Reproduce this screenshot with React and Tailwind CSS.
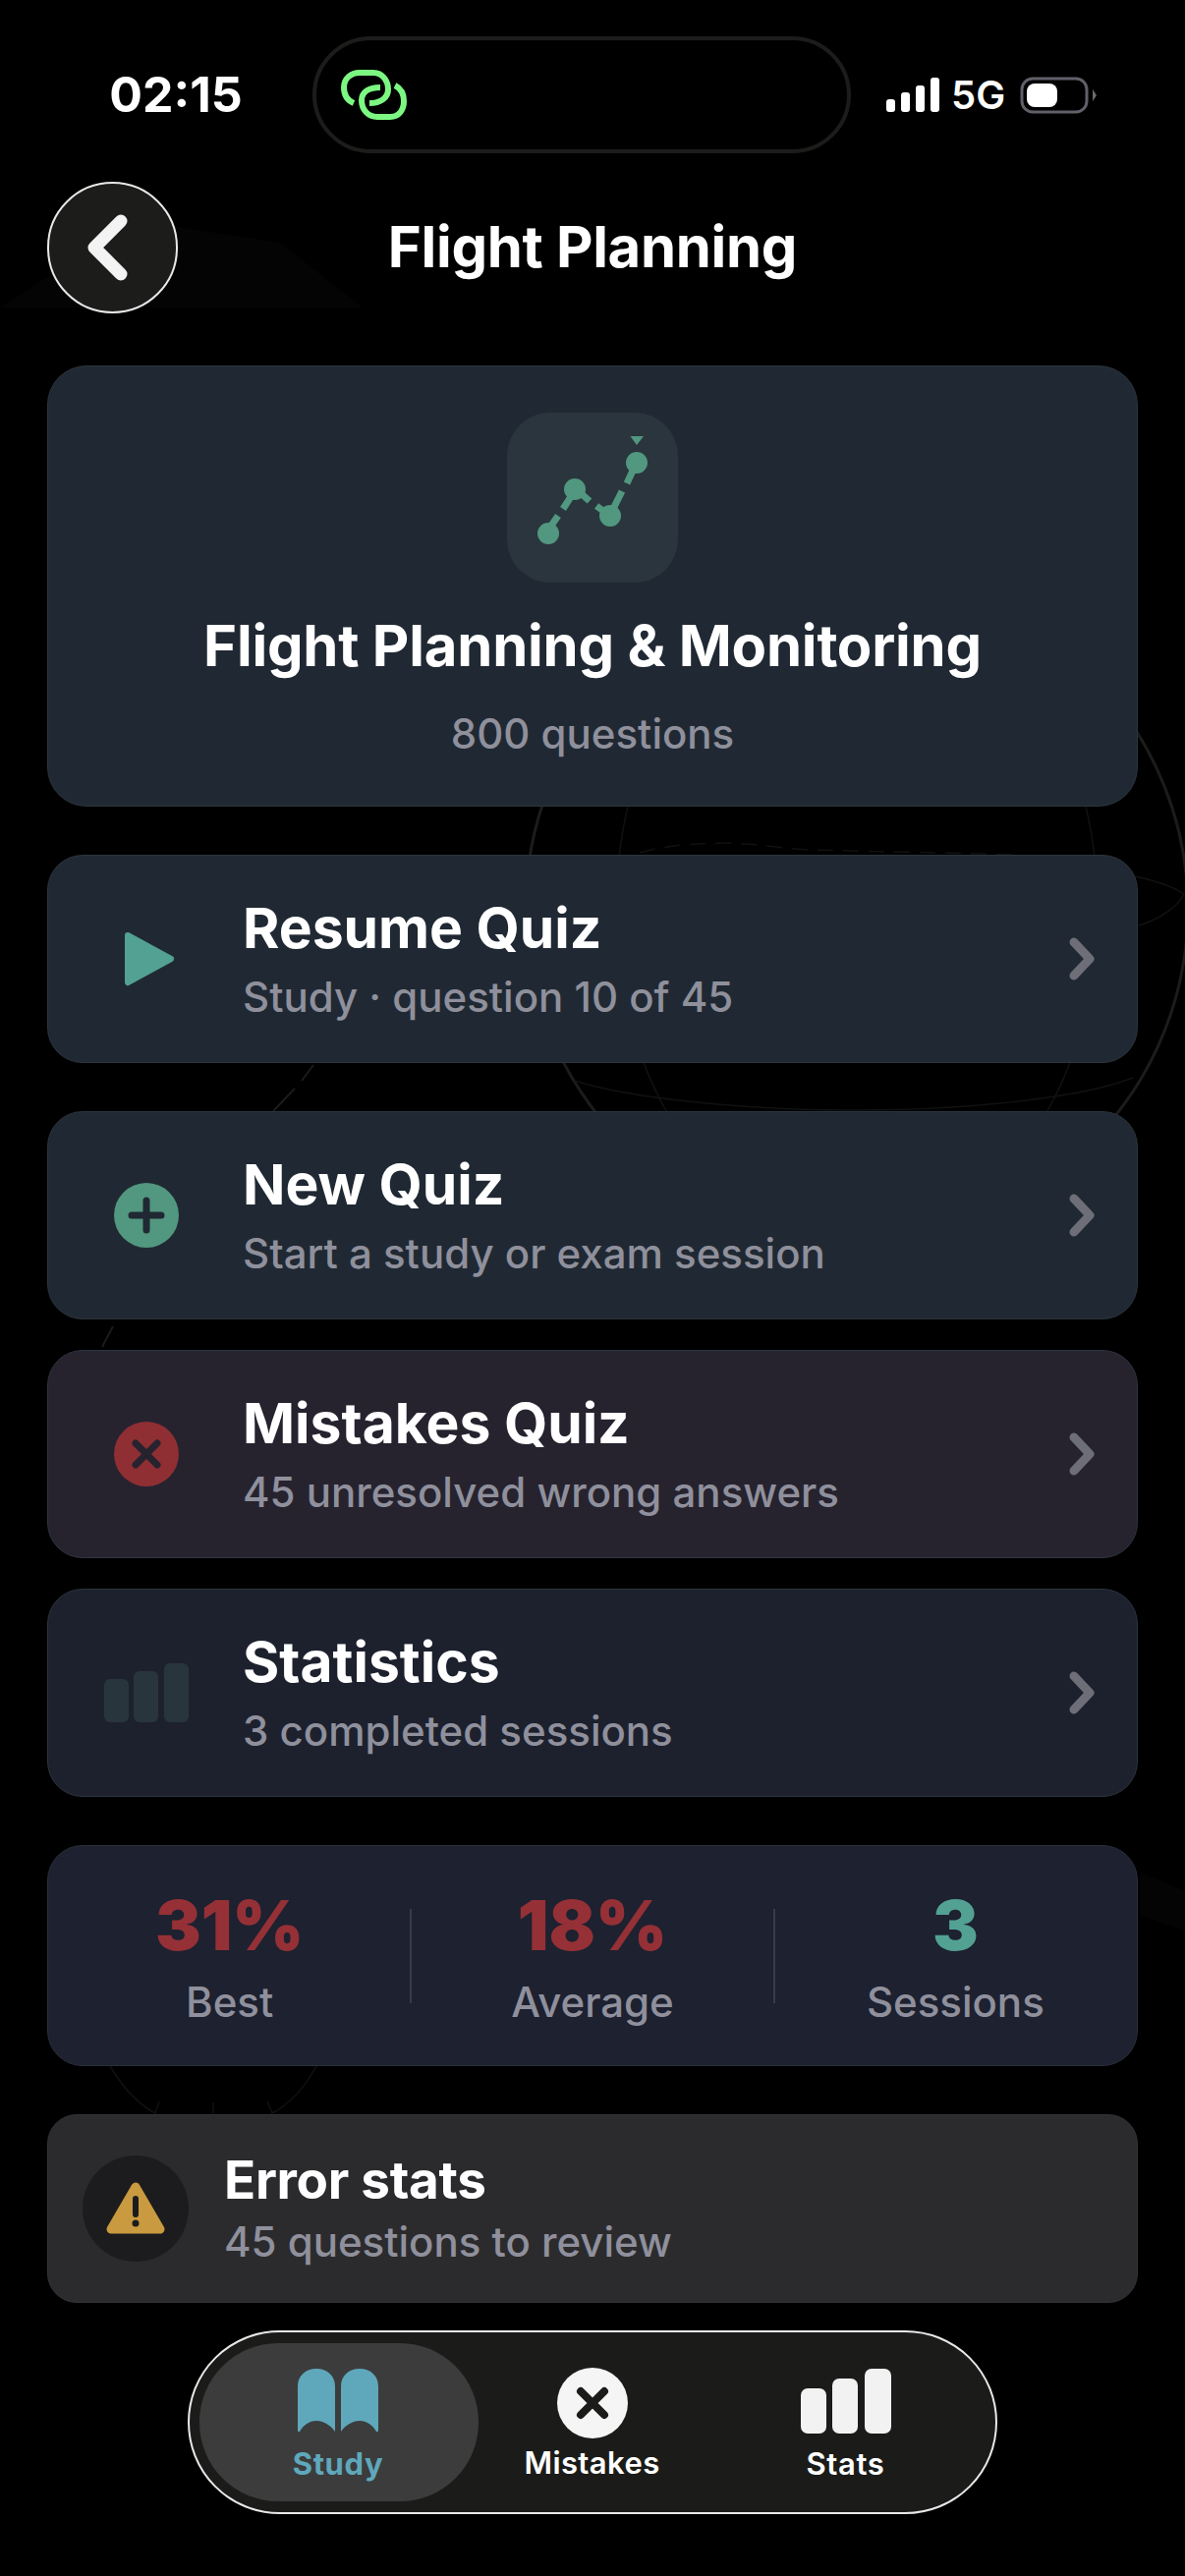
const F = { fontFamily: 'Inter, "Liberation Sans", sans-serif' };

function Chevron() {
  return (
    <svg width="30" height="44" viewBox="0 0 30 44" className="shrink-0">
      <path d="M7 5 L23 22 L7 39" fill="none" stroke="#6d6e78" strokeWidth="9" strokeLinecap="round" strokeLinejoin="round" />
    </svg>
  );
}

function ActionCard({ bg, icon, title, sub, className }) {
  return (
    <div className={`h-[212px] rounded-[36px] border border-[#2c353d] flex items-center pl-[55px] pr-[41px] ${bg} ${className}`}>
      <div className="w-[90px] h-[90px] flex items-center justify-center shrink-0">{icon}</div>
      <div className="ml-[53px] flex-1 min-w-0 flex flex-col">
        <div className="text-[57px] leading-[64px] font-bold text-white">{title}</div>
        <div className="text-[42px] leading-[50px] mt-[13px] font-medium text-[#8f909c]">{sub}</div>
      </div>
      <Chevron />
    </div>
  );
}

function Stat({ value, label, color }) {
  return (
    <div className="flex-1 flex flex-col items-center">
      <div className={`text-[70px] leading-[72px] font-black ${color}`}>{value}</div>
      <div className="text-[42px] leading-[50px] mt-[17px] font-medium text-[#8f909c]">{label}</div>
    </div>
  );
}

function Decor() {
  return (
    <svg className="absolute inset-0 pointer-events-none" width="1206" height="2622" viewBox="0 0 1206 2622" fill="none">
      <path d="M0 313 L70 268 L110 238 L154 227 L285 247 L369 313 Z" fill="#040404" />
      <path d="M1160 1905 L1206 1925 L1206 1965 L1160 1950 Z" fill="#040404" />
      <circle cx="872" cy="925" r="337" stroke="#1c1d1b" strokeWidth="3" />
      <g stroke="#101112" strokeWidth="1.5">
        <ellipse cx="872" cy="925" rx="245" ry="337" />
        <path d="M651 868 C680 860 710 858 743 858 C780 860 800 864 824 865 L1040 870" strokeDasharray="16 10" />
        <path d="M585 1100 C640 1118 760 1130 870 1130 C980 1130 1100 1118 1153 1097" />
        <path d="M1155 892 C1180 897 1198 905 1205 910 C1198 925 1175 938 1155 943" />
        <path d="M112 2103 C125 2125 140 2142 160 2152" />
        <path d="M322 2103 C310 2125 295 2142 275 2152" />
        <path d="M162 2139 L158 2150 M217 2140 L217 2151 M272 2139 L277 2150" />
        <path d="M319 1084 L307 1100 M300 1108 L278 1131" stroke="#1a1b1c" strokeWidth="2" />
        <path d="M115 1350 L104 1371" stroke="#1a1b1c" strokeWidth="2" />
      </g>
    </svg>
  );
}

export default function App() {
  return (
    <div style={F} className="relative w-[1206px] h-[2622px] bg-black overflow-hidden text-white">
      <Decor />
      <div className="relative flex flex-col px-[48px]">
        {/* status bar */}
        <div className="h-[185px] pt-[37px] flex items-start">
          <div className="w-[270px] h-[119px] flex items-center justify-center pr-[8px] text-[50px] font-bold">02:15</div>
          <div className="w-[548px] h-[119px] rounded-[60px] border-[4px] border-[#1c1d1b] flex items-center pl-[25px]">
            <svg width="67" height="53" viewBox="0 0 67 53" fill="none" stroke="#7cf882" strokeWidth="6">
              <path d="M13 35 C6 32 3 26 3 19 C3 10 10 4 19 4 L33 4 C42 4 48 12 48 21 C48 30 40 35 29 35" />
              <path d="M40 19 C28 19 21 24 21 32 C21 42 28 49 37 49 L50 49 C59 49 64 42 64 33 C64 26 61 20 55 17" />
            </svg>
          </div>
          <div className="flex-1 h-[119px] flex items-center pl-[36px]">
            <svg width="54" height="36" viewBox="0 0 54 36" fill="#fff">
              <rect x="0" y="22" width="9" height="13" rx="3" />
              <rect x="15" y="15" width="9" height="20" rx="3" />
              <rect x="30" y="8" width="9" height="27" rx="3" />
              <rect x="45" y="0" width="9" height="35" rx="3" />
            </svg>
            <span className="ml-[12px] text-[40px] leading-none font-semibold">5G</span>
            <svg width="80" height="38" viewBox="0 0 80 38" fill="none" className="ml-[15px]">
              <rect x="2" y="2" width="66" height="34" rx="11" stroke="#5f6068" strokeWidth="3" />
              <rect x="7" y="7" width="31" height="24" rx="8" fill="#fff" />
              <path d="M74 13 L78 19 L74 25 Z" fill="#6a6b72" />
            </svg>
          </div>
        </div>

        {/* header */}
        <div className="h-[133px] flex items-center relative">
          <div className="w-[133px] h-[134px] rounded-full bg-[#1c1d1b] border-2 border-[#e8e8e8] flex items-center justify-center shrink-0">
            <svg width="48" height="68" viewBox="0 0 48 68" fill="none" className="mr-[10px]">
              <path d="M37 7 L10 34 L37 61" stroke="#f3f3f3" strokeWidth="13" strokeLinecap="round" strokeLinejoin="round" />
            </svg>
          </div>
          <div className="flex-1 text-center pr-[133px] text-[58px] font-bold tracking-[-0.3px]">Flight Planning</div>
        </div>

        {/* hero */}
        <div className="mt-[54px] h-[449px] rounded-[40px] bg-[#202933] border border-[#2c353d] flex flex-col items-center pt-[47px]">
          <div className="w-[174px] h-[173px] rounded-[44px] bg-[#2a353d] flex items-center justify-center">
            <svg width="172" height="173" viewBox="0 0 172 173" fill="#52977f">
              <circle cx="41" cy="123" r="11" />
              <circle cx="68" cy="78" r="11" />
              <circle cx="104" cy="105" r="11" />
              <circle cx="131" cy="51" r="11" />
              <path d="M124.5 24 H138 L131 33 Z" />
              <g stroke="#52977f" strokeWidth="7">
                <path d="M44 115 L51 105" />
                <path d="M56 98 L65 84" />
                <path d="M74 82 L83 90" />
                <path d="M90 95 L97 100" />
                <path d="M116 80 L106 100" />
                <path d="M121 72 L127 59" />
              </g>
            </svg>
          </div>
          <div className="mt-[29px] text-[58px] leading-[70px] font-bold tracking-[-0.2px]">Flight Planning &amp; Monitoring</div>
          <div className="mt-[30px] text-[42px] leading-[50px] font-medium text-[#8f909c]">800 questions</div>
        </div>

        {/* actions */}
        <ActionCard
          className="mt-[49px]"
          bg="bg-[#202933]"
          title="Resume Quiz"
          sub="Study · question 10 of 45"
          icon={
            <svg width="56" height="60" viewBox="0 0 56 60" className="ml-[6px]">
              <path d="M6 6 L50 30 L6 54 Z" fill="#52a193" stroke="#52a193" strokeWidth="6" strokeLinejoin="round" />
            </svg>
          }
        />
        <ActionCard
          className="mt-[49px]"
          bg="bg-[#202933]"
          title="New Quiz"
          sub="Start a study or exam session"
          icon={
            <svg width="68" height="68" viewBox="0 0 68 68">
              <circle cx="34" cy="34" r="33" fill="#52977f" />
              <path d="M34 19 V49 M19 34 H49" stroke="#202933" strokeWidth="7" strokeLinecap="round" />
            </svg>
          }
        />
        <ActionCard
          className="mt-[31px]"
          bg="bg-[#26232f]"
          title="Mistakes Quiz"
          sub="45 unresolved wrong answers"
          icon={
            <svg width="68" height="68" viewBox="0 0 68 68">
              <circle cx="34" cy="34" r="33" fill="#8f2f33" />
              <path d="M23 23 L45 45 M45 23 L23 45" stroke="#26232f" strokeWidth="7" strokeLinecap="round" />
            </svg>
          }
        />
        <ActionCard
          className="mt-[31px]"
          bg="bg-[#1d212e]"
          title="Statistics"
          sub="3 completed sessions"
          icon={
            <svg width="86" height="60" viewBox="0 0 86 60" fill="#29353c">
              <rect x="0" y="16" width="25" height="44" rx="6" />
              <rect x="30" y="8" width="25" height="52" rx="6" />
              <rect x="61" y="0" width="25" height="60" rx="6" />
            </svg>
          }
        />

        {/* stats panel */}
        <div className="mt-[49px] h-[225px] rounded-[36px] bg-[#1d2130] border border-[#2a2f3b] flex items-center px-[1px] pt-[6px]">
          <Stat value="31%" label="Best" color="text-[#953036]" />
          <div className="w-[2px] h-[96px] mt-[-6px] bg-[#383c47]" />
          <Stat value="18%" label="Average" color="text-[#953036]" />
          <div className="w-[2px] h-[96px] mt-[-6px] bg-[#383c47]" />
          <Stat value="3" label="Sessions" color="text-[#52a193]" />
        </div>

        {/* error stats */}
        <div className="mt-[49px] h-[192px] rounded-[30px] bg-[#2b2b2e] border border-[#333336] flex items-center pl-[35px]">
          <div className="w-[108px] h-[108px] rounded-full bg-[#1c1c1e] flex items-center justify-center shrink-0">
            <svg width="60" height="54" viewBox="0 0 60 54">
              <path d="M30 5 L55 48 H5 Z" fill="#c99a3f" stroke="#c99a3f" strokeWidth="9" strokeLinejoin="round" />
              <path d="M30 17 V33" stroke="#1c1c1e" strokeWidth="6" strokeLinecap="round" />
              <circle cx="30" cy="42" r="3.5" fill="#1c1c1e" />
            </svg>
          </div>
          <div className="ml-[36px] flex flex-col">
            <div className="text-[53px] leading-[58px] font-bold tracking-[-0.3px]">Error stats</div>
            <div className="text-[42px] leading-[50px] mt-[9px] font-medium text-[#8f909c]">45 questions to review</div>
          </div>
        </div>

        {/* tab bar */}
        <div className="mt-[28px] self-center w-[824px] h-[187px] rounded-[94px] bg-[#1b1c1a] border-2 border-[#e8e8e8] flex items-center p-[10px]">
          <div className="w-[284px] h-[161px] rounded-[80px] bg-[#3c3c3d] flex flex-col items-center justify-center pt-[5px] pr-[2px]">
            <svg width="82" height="66" viewBox="0 0 82 66" fill="#5fa8bb">
              <path d="M0 18 C0 7 8 0 19 0 C30 0 38 7 38 18 V64 C33 57 26 53 19 53 C12 53 6 57 2 64 C1 65 0 64 0 62 Z" />
              <path d="M44 18 C44 7 52 0 63 0 C74 0 82 7 82 18 V62 C82 64 81 65 80 64 C76 57 70 53 63 53 C56 53 49 57 44 64 Z" />
            </svg>
            <div className="mt-[13px] text-[31px] leading-[36px] font-bold text-[#5fa8bb] tracking-[0.6px]">Study</div>
          </div>
          <div className="w-[231px] h-[161px] flex flex-col items-center justify-center pt-[4px]">
            <svg width="72" height="72" viewBox="0 0 72 72">
              <circle cx="36" cy="36" r="36" fill="#f5f5f5" />
              <path d="M24 24 L48 48 M48 24 L24 48" stroke="#1b1c1a" strokeWidth="8" strokeLinecap="round" />
            </svg>
            <div className="mt-[7px] text-[31px] leading-[36px] font-semibold tracking-[0.4px]">Mistakes</div>
          </div>
          <div className="flex-1 h-[161px] flex flex-col items-center justify-center pt-[5px]">
            <svg width="92" height="66" viewBox="0 0 92 66" fill="#f2f2f2">
              <rect x="0" y="20" width="26" height="46" rx="7" />
              <rect x="32" y="10" width="26" height="56" rx="7" />
              <rect x="65" y="0" width="27" height="66" rx="7" />
            </svg>
            <div className="mt-[13px] text-[31px] leading-[36px] font-semibold tracking-[0.6px]">Stats</div>
          </div>
        </div>
      </div>
    </div>
  );
}
